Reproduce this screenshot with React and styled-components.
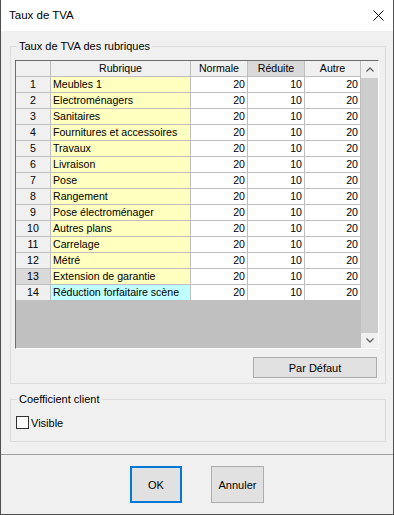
import React from 'react';
import styled, { createGlobalStyle } from 'styled-components';

const rubriques = [
  'Meubles 1',
  'Electroménagers',
  'Sanitaires',
  'Fournitures et accessoires',
  'Travaux',
  'Livraison',
  'Pose',
  'Rangement',
  'Pose électroménager',
  'Autres plans',
  'Carrelage',
  'Métré',
  'Extension de garantie',
  'Réduction forfaitaire scène',
];

const tones = {
  head: '#f0f0f0',
  active: '#d9d9d9',
  yellow: '#ffffc0',
  cyan: '#c0ffff',
  white: '#ffffff',
};

function App() {
  return (
    <>
      <GlobalStyle />
      <Window>
        <TitleBar>
          <Title>Taux de TVA</Title>
          <svg width="11" height="11" viewBox="0 0 11 11">
            <path d="M0.5 0.5 L10.5 10.5 M10.5 0.5 L0.5 10.5" stroke="#000" strokeWidth="1" />
          </svg>
        </TitleBar>

        <Body>
          <GroupBox $pad="7px 6px 5px 4px">
            <Legend>Taux de TVA des rubriques</Legend>
            <Column>
              <GridFrame>
                <Table>
                  <Row>
                    <Cell $tone="head" />
                    <Cell $tone="head" $align="center">Rubrique</Cell>
                    <Cell $tone="head" $align="center">Normale</Cell>
                    <Cell $tone="active" $align="center">Réduite</Cell>
                    <Cell $tone="head" $align="center">Autre</Cell>
                  </Row>
                  {rubriques.map((name, i) => (
                    <Row key={name}>
                      <Cell $tone={i === 12 ? 'active' : 'head'} $align="center">{i + 1}</Cell>
                      <Cell $tone={i === 13 ? 'cyan' : 'yellow'}>{name}</Cell>
                      <Cell $align="right">20</Cell>
                      <Cell $align="right">10</Cell>
                      <Cell $align="right">20</Cell>
                    </Row>
                  ))}
                  <Filler />
                </Table>
                <ScrollBar>
                  <ArrowBox>
                    <svg width="8" height="5" viewBox="0 0 8 5">
                      <path d="M0.5 4.5 L4 1 L7.5 4.5" fill="none" stroke="#606060" strokeWidth="1.3" />
                    </svg>
                  </ArrowBox>
                  <Thumb />
                  <ArrowBox $short>
                    <svg width="8" height="5" viewBox="0 0 8 5">
                      <path d="M0.5 0.5 L4 4 L7.5 0.5" fill="none" stroke="#606060" strokeWidth="1.3" />
                    </svg>
                  </ArrowBox>
                </ScrollBar>
              </GridFrame>
              <DefaultButton>Par Défaut</DefaultButton>
            </Column>
          </GroupBox>

          <GroupBox $pad="10px 6px 12px 4px" $gap>
            <Legend>Coefficient client</Legend>
            <CheckRow>
              <CheckBox />
              <span>Visible</span>
            </CheckRow>
          </GroupBox>
        </Body>

        <Footer>
          <DialogButton $primary>OK</DialogButton>
          <DialogButton>Annuler</DialogButton>
        </Footer>
      </Window>
    </>
  );
}

export default App;

const GlobalStyle = createGlobalStyle`
  html, body {
    margin: 0;
    padding: 0;
  }
  body {
    font-family: "Liberation Sans", Arial, sans-serif;
    font-size: 11px;
    color: #000;
  }
`;

const Window = styled.div`
  width: 394px;
  height: 515px;
  box-sizing: border-box;
  border: 1px solid #4f4f4f;
  border-top: none;
  background: #f0f0f0;
  display: flex;
  flex-direction: column;
`;

const TitleBar = styled.div`
  height: 31px;
  flex-shrink: 0;
  background: #fff;
  display: flex;
  align-items: center;
  justify-content: space-between;
  padding: 0 9px 1px 8px;
  box-sizing: border-box;
`;

const Title = styled.span`
  font-size: 11.5px;
`;

const Body = styled.div`
  padding: 8px 7px 0 9px;
  display: flex;
  flex-direction: column;
`;

const GroupBox = styled.fieldset`
  margin: ${p => (p.$gap ? '8px 0 0' : '0')};
  padding: ${p => p.$pad};
  border: 1px solid #dcdcdc;
  min-width: 0;
`;

const Legend = styled.legend`
  padding: 0 2px;
  margin-left: 2px;
  line-height: 14px;
  font-size: 11px;
`;

const Column = styled.div`
  display: flex;
  flex-direction: column;
`;

const GridFrame = styled.div`
  height: 289px;
  box-sizing: border-box;
  border: 1px solid #fff;
  border-top-color: #6d6d6d;
  border-left-color: #6d6d6d;
  display: flex;
`;

const Table = styled.div`
  flex: 1;
  display: flex;
  flex-direction: column;
`;

const Row = styled.div`
  display: grid;
  grid-template-columns: 35px 140px 57px 57px 56px;
  height: 16px;
  flex-shrink: 0;
`;

const Cell = styled.div`
  box-sizing: border-box;
  border-right: 1px solid #bfbfbf;
  border-bottom: 1px solid #bfbfbf;
  background: ${p => tones[p.$tone || 'white']};
  text-align: ${p => p.$align || 'left'};
  padding: 0 2px 0 2px;
  font-size: 10.6px;
  line-height: 15px;
  white-space: nowrap;
  overflow: hidden;
`;

const Filler = styled.div`
  flex: 1;
  background: #c0c0c0;
`;

const ScrollBar = styled.div`
  width: 17px;
  background: #f0f0f0;
  display: flex;
  flex-direction: column;
`;

const ArrowBox = styled.div`
  height: ${p => (p.$short ? '15px' : '17px')};
  display: flex;
  align-items: center;
  justify-content: center;
  flex-shrink: 0;
`;

const Thumb = styled.div`
  flex: 1;
  background: #cdcdcd;
`;

const DefaultButton = styled.button`
  align-self: flex-end;
  margin: 8px 2px 0 0;
  width: 124px;
  height: 21px;
  box-sizing: border-box;
  border: 1px solid #adadad;
  background: #e1e1e1;
  font-family: inherit;
  font-size: 11px;
  color: #000;
  padding: 0;
`;

const CheckRow = styled.label`
  display: flex;
  align-items: center;
  gap: 2px;
  height: 13px;
  margin-left: 1px;
`;

const CheckBox = styled.span`
  width: 13px;
  height: 13px;
  box-sizing: border-box;
  border: 1px solid #333;
  background: #fff;
`;

const Footer = styled.div`
  margin-top: auto;
  border-top: 1px solid #a0a0a0;
  padding: 11px 0;
  display: flex;
  justify-content: center;
  gap: 29px;
`;

const DialogButton = styled.button`
  width: ${p => (p.$primary ? '52px' : '53px')};
  height: 37px;
  box-sizing: border-box;
  border: ${p => (p.$primary ? '2px solid #0078d7' : '1px solid #adadad')};
  background: #e1e1e1;
  font-family: inherit;
  font-size: 11px;
  color: #000;
  padding: 0;
`;
